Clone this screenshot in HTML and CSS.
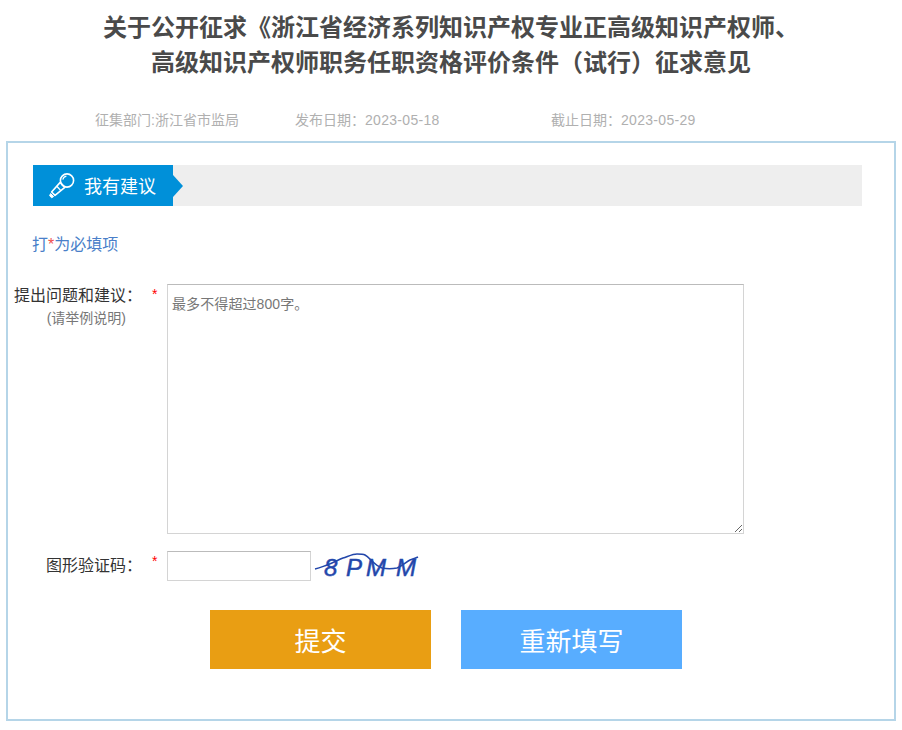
FILE: index.html
```html
<!DOCTYPE html>
<html lang="zh-CN">
<head>
<meta charset="utf-8">
<title>征求意见</title>
<link rel="stylesheet" href="styles.css">
</head>
<body>
<div class="page">
  <h1 class="title">关于公开征求《浙江省经济系列知识产权专业正高级知识产权师、<br>高级知识产权师职务任职资格评价条件（试行）征求意见</h1>
  <div class="meta">
    <span>征集部门:浙江省市监局</span>
    <span>发布日期：<span class="date">2023-05-18</span></span>
    <span>截止日期：<span class="date">2023-05-29</span></span>
  </div>
  <form class="panel">
    <div class="bar">
      <div class="bar-tab">
        <svg class="mic" width="26" height="26" viewBox="0 0 26 26" fill="none" stroke="#fff">
          <circle cx="18" cy="7.5" r="6.6" stroke-width="1.6"/>
          <path d="M13.8 6.6a4.4 4.4 0 0 1 3.6-3.4" stroke-width="1.2"/>
          <path d="M11.2 9.4 15.8 14.4 6 22.4 2.6 19Z" stroke-width="1.6" stroke-linejoin="round"/>
          <path d="M1.6 20.6 4.6 23.6 2.6 24.8 .6 22.6Z" fill="#fff" stroke-width="1" stroke-linejoin="round"/>
          <path d="M7.6 13 11.6 17.4" stroke-width="1.3"/>
        </svg>
        <span class="tab-text">我有建议</span>
      </div>
    </div>
    <p class="hint">打<span class="red">*</span>为必填项</p>
    <div class="row row-text">
      <div class="label">提出问题和建议：<small>(请举例说明)</small></div>
      <div class="req">*</div>
      <textarea class="area" placeholder="最多不得超过800字。"></textarea>
    </div>
    <div class="row row-code">
      <div class="label">图形验证码：</div>
      <div class="req">*</div>
      <input class="code" type="text">
      <svg class="captcha" width="106" height="30" viewBox="0 0 106 30">
        <text class="captcha-text" x="8 30 50 80" y="25">8PMM</text>
        <path d="M-1 18C4 17 8 15 11 14 17 12 22 9 27 7 33 5 37 3 41 3 45 3 47 3 49 4 53 6 54 9 57 11 60 14 63 16 66 17 71 18 76 18 81 17 86 15 90 11 94 9 97 8 100 7 102 6" fill="none" stroke="#2347ab" stroke-width="1.6"/>
      </svg>
    </div>
    <div class="actions">
      <button class="btn btn-submit" type="button">提交</button>
      <button class="btn btn-reset" type="button">重新填写</button>
    </div>
  </form>
</div>
</body>
</html>
```
FILE: styles.css
```css
* { box-sizing: border-box; }
html, body { margin: 0; padding: 0; background: #fff; }
body {
  font-family: "Liberation Sans", "Noto Sans CJK SC", sans-serif;
  font-size: 14px;
  color: #333;
}
.page { width: 902px; height: 730px; overflow: hidden; padding-top: 10px; }
.title {
  margin: 0;
  text-align: center;
  font-size: 24px;
  line-height: 35px;
  font-weight: bold;
  color: #4a4a4a;
}
.meta {
  display: grid;
  grid-template-columns: 200px 256px auto;
  margin-top: 30px;
  padding-left: 95px;
  font-size: 14px;
  line-height: 20px;
  color: #b0b0b0;
}
.date { letter-spacing: 0.3px; }
.panel {
  width: 890px;
  height: 580px;
  margin: 11px 0 0 6px;
  border: 2px solid #b5d5e8;
  padding: 22px 32px 0 25px;
}
.bar { height: 41px; background: #eee; }
.bar-tab {
  position: relative;
  display: flex;
  align-items: center;
  gap: 8px;
  width: 140px;
  height: 41px;
  padding-left: 16px;
  background: #0090d9;
  color: #fff;
  font-size: 18px;
}
.bar-tab::after {
  content: "";
  position: absolute;
  left: 100%;
  top: 10px;
  border-left: 10px solid #0090d9;
  border-top: 11px solid transparent;
  border-bottom: 11px solid transparent;
}
.mic { flex: none; }
.tab-text { padding: 0 0 2px 1px; }
.hint {
  margin: 28px 0 0 -1px;
  font-size: 16px;
  line-height: 22px;
  color: #4a7fc9;
}
.red { color: #f05050; }
.row {
  display: grid;
  grid-template-columns: 134px 25px auto;
  margin-left: -25px;
  margin-right: -32px;
}
.row-text { margin-top: 28px; height: 250px; }
.row-code { grid-template-columns: 134px 25px 144px auto; margin-top: 17px; height: 30px; }
.label {
  padding-top: 1px;
  text-align: right;
  font-size: 16px;
  line-height: 22px;
  color: #333;
  white-space: nowrap;
}
.row-code .label { line-height: 28px; }
.label small {
  display: block;
  padding-right: 16px;
  margin-top: 1px;
  font-size: 14px;
  line-height: 20px;
  color: #777;
}
.req { padding-left: 10px; color: #f00; line-height: 20px; }
.area {
  width: 577px;
  height: 250px;
  margin: 0;
  padding: 9px 4px;
  border: 1px solid #d4d4d4;
  border-top-color: #bbb;
  border-radius: 0;
  font-family: inherit;
  font-size: 14px;
  line-height: 20px;
  letter-spacing: 0.1px;
  outline: none;
}
.area::placeholder { color: #777; opacity: 1; }
.code {
  width: 144px;
  height: 30px;
  margin: 0;
  padding: 0 5px;
  border: 1px solid #d4d4d4;
  border-top-color: #bbb;
  border-radius: 0;
  outline: none;
}
.captcha { margin-left: 5px; overflow: visible; }
.captcha-text {
  font-family: "Liberation Sans", sans-serif;
  font-style: italic;
  font-size: 24px;
  fill: #2347ab;
  stroke: #2347ab;
  stroke-width: 0.5px;
}
.actions {
  display: flex;
  gap: 30px;
  margin: 29px 0 0 177px;
}
.btn {
  width: 221px;
  height: 59px;
  border: 0;
  padding: 0;
  color: #fff;
  font-family: inherit;
  font-size: 26px;
}
.btn-submit { background: #e99e13; }
.btn-reset { background: #58adff; }
```
